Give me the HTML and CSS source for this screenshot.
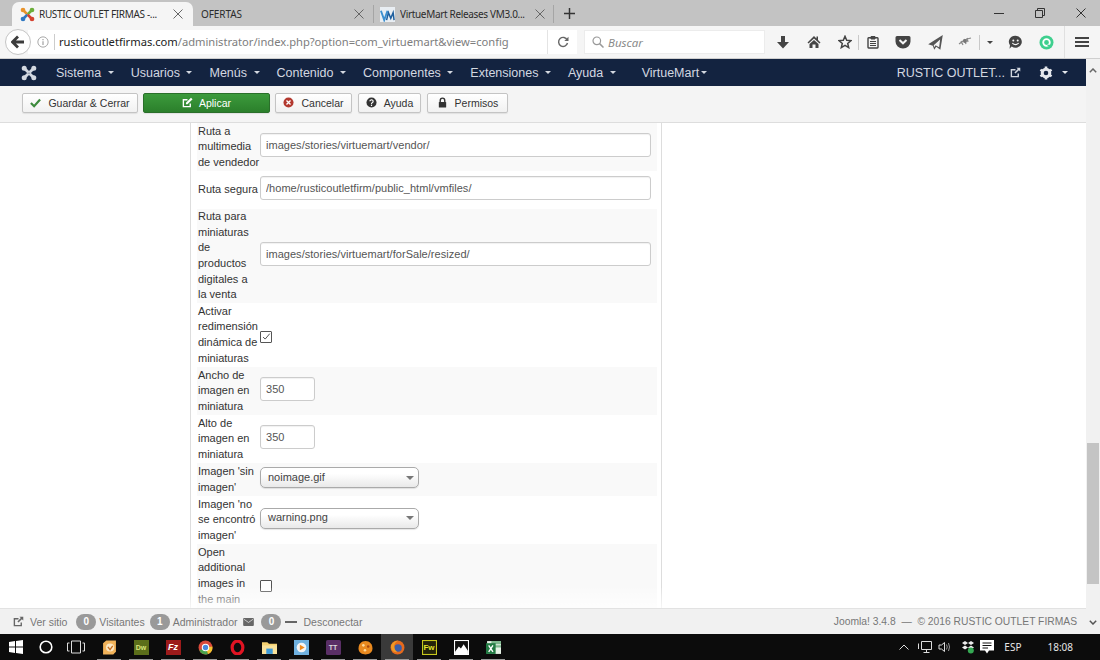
FILE: index.html
```html
<!DOCTYPE html>
<html lang="es">
<head>
<meta charset="utf-8">
<title>RUSTIC OUTLET FIRMAS</title>
<link rel="stylesheet" href="styles.css">
</head>
<body>
<header class="tabstrip">
  <div class="tab tab-active">
    <svg class="favicon" viewBox="0 0 16 16" fill="none" stroke-linecap="round"><path d="M3.500 3.500 7 7" stroke="#e8932c" stroke-width="2.800"/><path d="M3.200 3.200h.01" stroke="#e8932c" stroke-width="5"/><path d="M12.500 3.500 9 7" stroke="#6cae3a" stroke-width="2.800"/><path d="M12.800 3.200h.01" stroke="#6cae3a" stroke-width="5"/><path d="M3.500 12.500 7 9" stroke="#2f78c2" stroke-width="2.800"/><path d="M3.200 12.800h.01" stroke="#2f78c2" stroke-width="5"/><path d="M12.500 12.500 9 9" stroke="#d5412f" stroke-width="2.800"/><path d="M12.800 12.800h.01" stroke="#d5412f" stroke-width="5"/></svg>
    <span class="tab-title">RUSTIC OUTLET FIRMAS -...</span>
    <svg class="tab-x" viewBox="0 0 10 10"><path d="M0.5 0.5 9.5 9.5M9.5 0.5 0.5 9.5"/></svg>
  </div>
  <div class="tab tab-plain tab-two">
    <span class="tab-title tab-title-wide">OFERTAS</span>
    <svg class="tab-x" viewBox="0 0 10 10"><path d="M0.5 0.5 9.5 9.5M9.5 0.5 0.5 9.5"/></svg>
  </div>
  <div class="tab tab-plain tab-three">
    <svg class="favicon favicon-vm" viewBox="0 0 16 16"><rect width="16" height="16" fill="#e9eef3"/><path d="M1 4 4.500 14 8 4" fill="none" stroke="#3b8fd0" stroke-width="2"/><path d="M7 14 9 6 11.500 12 14 6 15 14" fill="none" stroke="#1f5f9e" stroke-width="1.600"/></svg>
    <span class="tab-title">VirtueMart Releases VM3.0...</span>
    <svg class="tab-x" viewBox="0 0 10 10"><path d="M0.5 0.5 9.5 9.5M9.5 0.5 0.5 9.5"/></svg>
  </div>
  <svg class="tab-plus" viewBox="0 0 12 12"><path d="M6 0V12M0 6H12"/></svg>
  <div class="window-controls">
    <svg viewBox="0 0 10 10"><path d="M0 5.500H10" stroke="#333" fill="none"/></svg>
    <svg viewBox="0 0 10 10"><path d="M.5 2.500H7.500V9.500H.5ZM2.500 2.500V.5H9.500V7.500H7.500" stroke="#333" fill="none"/></svg>
    <svg viewBox="0 0 10 10"><path d="M.5 .5 9.500 9.500M9.500 .5 .5 9.500" stroke="#333" fill="none"/></svg>
  </div>
</header>

<div class="navbar">
  <div class="back-btn"><svg viewBox="0 0 14 14"><path d="M7 1.500 1.500 7 7 12.500M2 7H13" fill="none" stroke="#3c3c3c" stroke-width="2.800"/></svg></div>
  <div class="urlbar">
    <svg class="info" viewBox="0 0 14 14"><circle cx="7" cy="7" r="6" fill="none" stroke="#999"/><path d="M7 6V10.500M7 3.500V5" stroke="#999" stroke-width="1.300"/></svg>
    <span class="url"><b>rusticoutletfirmas.com</b>/administrator/index.php?option=com_virtuemart&amp;view=config</span>
  </div>
  <div class="reload"><svg viewBox="0 0 12 12"><path d="M10.200 4A4.500 4.500 0 1 0 10.500 7" fill="none" stroke="#666" stroke-width="1.400"/><path d="M11.500 .8V5H7.300Z" fill="#666"/></svg></div>
  <div class="searchbar">
    <svg viewBox="0 0 12 12"><circle cx="4.800" cy="4.800" r="3.800" fill="none" stroke="#999" stroke-width="1.200"/><path d="M7.600 7.600 11.500 11.500" stroke="#999" stroke-width="1.500"/></svg>
    <span>Buscar</span>
  </div>
  <div class="tools">
    <svg class="t-down" viewBox="0 0 14 14"><path d="M5 1H9V7H13L7 13.500 1 7H5Z" fill="#444"/></svg>
    <svg class="t-home" viewBox="0 0 14 14"><path d="M7 1 .5 7.500 1.500 8.500 7 3.500 12.500 8.500 13.500 7.500 11 5V1.500H9.500V3.500ZM2.500 9 7 5 11.500 9V13H8.500V9.500H5.500V13H2.500Z" fill="#444"/></svg>
    <svg class="t-star" viewBox="0 0 14 14"><path d="M7 1.300 8.700 5.200 13 5.600 9.700 8.400 10.700 12.600 7 10.400 3.300 12.600 4.300 8.400 1 5.600 5.300 5.200Z" fill="none" stroke="#444" stroke-width="1.500"/></svg>
    <i class="t-sep t-sep1"></i>
    <svg class="t-clip" viewBox="0 0 14 14"><path d="M2.700 2.800H11.300A.8.8 0 0 1 12 3.600V12.200A.8.8 0 0 1 11.300 13H2.700A.8.8 0 0 1 2 12.200V3.600A.8.8 0 0 1 2.700 2.800Z" fill="none" stroke="#444" stroke-width="1.400"/><path d="M5 1.500H9V4H5ZM4 6.500H10M4 8.500H10M4 10.500H10" fill="#444" stroke="#444"/></svg>
    <svg class="t-pocket" viewBox="0 0 16 14"><path d="M2 1H14A1.500 1.500 0 0 1 15.500 2.500V6.500A7.500 7 0 0 1 .5 6.500V2.500A1.500 1.500 0 0 1 2 1Z" fill="#444"/><path d="M4.500 5 8 8.300 11.500 5" fill="none" stroke="#f5f5f5" stroke-width="2"/></svg>
    <svg class="t-plane" viewBox="0 0 14 14"><path d="M13 .8 1 8.500 4.800 9.700 6 13 7.600 10.600 11 13ZM10.800 4.500 5.500 9.200 6.200 11 7 9.300 10 11Z" fill="#555" fill-rule="evenodd"/></svg>
    <svg class="t-bug" viewBox="0 0 16 12"><path d="M2 8 6 5 10 3 14 2M4 5 6 9M7 3 9 8M10 2 11 6" stroke="#888" stroke-width="1.200" fill="none"/><circle cx="8" cy="5" r="2" fill="#777"/></svg>
    <i class="t-sep t-sep2"></i>
    <i class="t-caret"></i>
    <svg class="t-smile" viewBox="0 0 15 15"><path d="M7.500 .8A6.300 6 0 1 1 3.700 11.600L1.500 13.800 2 10.200A6.300 6 0 0 1 7.500 .8Z" fill="#444"/><circle cx="5.300" cy="5.600" r="1" fill="#f5f5f5"/><circle cx="9.700" cy="5.600" r="1" fill="#f5f5f5"/><path d="M4.300 8.200Q7.500 11 10.700 8.200" fill="none" stroke="#f5f5f5" stroke-width="1.100"/></svg>
    <svg class="t-green" viewBox="0 0 15 15"><circle cx="7.500" cy="7.500" r="7" fill="#3ecf8e"/><circle cx="7.500" cy="7.500" r="3.300" fill="none" stroke="#fff" stroke-width="1.800"/><path d="M8.500 10.500H11" stroke="#3ecf8e" stroke-width="1.500"/></svg>
    <i class="t-sep t-sep3"></i>
    <svg class="t-menu" viewBox="0 0 14 12"><path d="M0 2H14M0 6H14M0 10H14" stroke="#444" stroke-width="2.200"/></svg>
  </div>
</div>

<div class="viewport">
  <div class="page">
    <nav class="topnav">
      <svg class="logo" viewBox="0 0 16 16" fill="none" stroke="#d3d8e0" stroke-linecap="round"><path d="M3.500 3.500 6.800 6.800M12.500 3.500 9.200 6.800M3.500 12.500 6.800 9.200M12.500 12.500 9.200 9.200" stroke-width="2.800"/><path d="M3.200 3.200h.01M12.800 3.200h.01M3.200 12.800h.01M12.800 12.800h.01" stroke-width="5"/></svg>
      <ul class="menu">
        <li>Sistema<i class="caret"></i></li>
        <li>Usuarios<i class="caret"></i></li>
        <li>Menús<i class="caret"></i></li>
        <li>Contenido<i class="caret"></i></li>
        <li>Componentes<i class="caret"></i></li>
        <li>Extensiones<i class="caret"></i></li>
        <li>Ayuda<i class="caret"></i></li>
        <li class="menu-vm">VirtueMart<i class="caret caret-tight"></i></li>
      </ul>
      <div class="nav-right">
        <span class="site-name">RUSTIC OUTLET...</span>
        <svg class="ext" viewBox="0 0 12 12"><path d="M9 7V10.500H1.500V3H6" fill="none" stroke="#d3d8e0" stroke-width="1.500"/><path d="M7 .8H11.200V5L9.700 3.500 6 7.200 4.800 6 8.500 2.300Z" fill="#d3d8e0"/></svg>
        <svg class="gear" viewBox="0 0 14 14"><circle cx="7" cy="7" r="3.800" fill="none" stroke="#e4e7ec" stroke-width="3"/><path d="M7 .5V3M7 11V13.500M1.400 3.750 3.500 5M10.500 9 12.600 10.250M1.400 10.250 3.500 9M10.500 5 12.600 3.750" stroke="#e4e7ec" stroke-width="2.600"/></svg>
        <i class="caret caret-gear"></i>
      </div>
    </nav>

    <div class="toolbar">
      <button class="btn btn-save" type="button"><svg viewBox="0 0 12 12"><path d="M1 6.500 4.500 10 11 2.800" fill="none" stroke="#3d8b3d" stroke-width="2.400"/></svg>Guardar &amp; Cerrar</button>
      <button class="btn btn-apply" type="button"><svg viewBox="0 0 12 12"><path d="M9 7V10.500H1.500V3H6" fill="none" stroke="#fff" stroke-width="1.500"/><path d="M9.800.8 11.500 2.500 6 8H4.300V6.200Z" fill="#fff"/></svg>Aplicar</button>
      <button class="btn btn-cancel" type="button"><svg viewBox="0 0 12 12"><circle cx="6" cy="6" r="5.500" fill="#b3392f"/><path d="M3.800 3.800 8.200 8.200M8.200 3.800 3.800 8.200" stroke="#fff" stroke-width="1.500"/></svg>Cancelar</button>
      <button class="btn btn-help" type="button"><svg viewBox="0 0 12 12"><circle cx="6" cy="6" r="5.500" fill="#333"/><path d="M4.200 4.700A1.800 1.700 0 1 1 6.700 6.300Q6 6.600 6 7.500" fill="none" stroke="#fff" stroke-width="1.300"/><path d="M6 8.300V9.800" stroke="#fff" stroke-width="1.300"/></svg>Ayuda</button>
      <button class="btn btn-perm" type="button"><svg viewBox="0 0 12 12"><path d="M3.500 5.500V4A2.500 2.800 0 0 1 8.500 4V5.500" fill="none" stroke="#333" stroke-width="1.500"/><rect x="2" y="5.500" width="8" height="6" rx=".6" fill="#333"/></svg>Permisos</button>
    </div>

    <main class="content">
      <div class="sidebar"></div>
      <section class="panel">
        <div class="row row-3 alt"><label>Ruta a multimedia de vendedor</label><input class="field" type="text" value="images/stories/virtuemart/vendor/"></div>
        <div class="row row-seg"><label>Ruta segura</label><input class="field" type="text" value="/home/rusticoutletfirm/public_html/vmfiles/"></div>
        <div class="row row-6 alt"><label>Ruta para miniaturas de productos digitales a<br>la venta</label><input class="field" type="text" value="images/stories/virtuemart/forSale/resized/"></div>
        <div class="row row-4"><label>Activar redimensión dinámica de miniaturas</label><span class="check check-on"><svg viewBox="0 0 12 12"><path d="M2.500 6 5 8.500 10.500 2" fill="none" stroke="#444" stroke-width="1.100"/></svg></span></div>
        <div class="row row-3 alt"><label>Ancho de imagen en miniatura</label><input class="field field-small" type="text" value="350"></div>
        <div class="row row-3"><label>Alto de imagen en miniatura</label><input class="field field-small" type="text" value="350"></div>
        <div class="row row-2 alt"><label>Imagen 'sin imagen'</label><div class="chosen">noimage.gif<i></i></div></div>
        <div class="row row-3"><label>Imagen 'no se encontró imagen'</label><div class="chosen">warning.png<i></i></div></div>
        <div class="row row-4 alt"><label>Open additional images in the main</label><span class="check check-low"></span></div>
      </section>
      <div class="fade"></div>
    </main>

    <footer class="statusbar">
      <svg class="fi" viewBox="0 0 12 12"><path d="M9 7V10.500H1.500V3H6" fill="none" stroke="#666" stroke-width="1.500"/><path d="M7 .8H11.200V5L9.700 3.500 6 7.200 4.800 6 8.500 2.300Z" fill="#666"/></svg>
      <span class="s-site">Ver sitio</span>
      <span class="pill">0</span><span class="s-tight">Visitantes</span>
      <span class="pill">1</span><span class="s-tight">Administrador</span>
      <svg class="mail" viewBox="0 0 12 9"><rect width="12" height="9" rx="1" fill="#666"/><path d="M1 1.500 6 5 11 1.500" fill="none" stroke="#eee" stroke-width=".8"/></svg>
      <span class="pill">0</span>
      <i class="dash"></i>
      <span class="s-out">Desconectar</span>
      <span class="s-copy">Joomla! 3.4.8 &nbsp;— &nbsp;© 2016 RUSTIC OUTLET FIRMAS</span>
    </footer>
  </div>
  <aside class="scrollbar">
    <svg viewBox="0 0 8 5"><path d="M.8 4.200 4 1 7.200 4.200" fill="none" stroke="#666" stroke-width="1.500"/></svg>
    <div class="scroll-track"><div class="thumb"></div></div>
    <svg viewBox="0 0 8 5"><path d="M.8 .8 4 4 7.200 .8" fill="none" stroke="#555" stroke-width="1.500"/></svg>
  </aside>
</div>

<div class="taskbar">
  <svg class="tb-win" viewBox="0 0 14 14"><path d="M0 2 6 1.100V6.500H0ZM7 1 14 0V6.500H7ZM0 7.500H6V12.900L0 12ZM7 7.500H14V14L7 13Z" fill="#fff"/></svg>
  <svg class="tb-sys" viewBox="0 0 14 14"><circle cx="7" cy="7" r="5.800" fill="none" stroke="#fff" stroke-width="1.600"/></svg>
  <svg class="tb-sys tb-view" viewBox="0 0 18 14"><path d="M4.500 1H13.500V13H4.500ZM2.500 3H.5V11H2.500M15.500 3H17.500V11H15.500" fill="none" stroke="#ddd"/></svg>
  <ul class="apps">
    <li class="on"><svg viewBox="0 0 14 14"><path d="M1 3 4 .5H13V11L10.500 13.500H1Z" fill="#f2b35a"/><circle cx="7.500" cy="7" r="3.800" fill="#fbe7c4"/><path d="M5.500 6.500 7.500 9 10 5.500" fill="none" stroke="#c76d1c" stroke-width="1.200"/></svg></li>
    <li class="on"><svg viewBox="0 0 14 14"><rect width="14" height="14" fill="#5b6e1a"/></svg><span class="app-txt app-dw">Dw</span></li>
    <li class="on"><svg viewBox="0 0 14 14"><rect width="14" height="14" fill="#9c1b1b"/></svg><span class="app-txt app-fz">Fz</span></li>
    <li class="on"><svg viewBox="0 0 14 14"><circle cx="7" cy="7" r="6.500" fill="#d9493a"/><path d="M7 7 1.200 9.800A6.500 6.500 0 0 0 9.500 13Z" fill="#4aa34c"/><path d="M7 7 13.400 6A6.500 6.500 0 0 1 9.500 13Z" fill="#f3c331"/><circle cx="7" cy="7" r="3" fill="#4a89dc" stroke="#fff"/></svg></li>
    <li class="on"><svg viewBox="0 0 14 14"><ellipse cx="7" cy="7" rx="5" ry="6" fill="none" stroke="#e11423" stroke-width="3"/></svg></li>
    <li class="on"><svg viewBox="0 0 14 14"><path d="M0 2H5L6.500 3.500H14V13H0Z" fill="#f4d06f"/><path d="M0 5H14V13H0Z" fill="#f9e29b"/><path d="M4 8H10V13H4Z" fill="#3f9bd8"/></svg></li>
    <li class="on"><svg viewBox="0 0 14 14"><rect width="14" height="14" fill="#6fb1e0"/><circle cx="7" cy="7" r="4.500" fill="#f5f5f5"/><path d="M5.500 4.500 10 7 5.500 9.500Z" fill="#f08a1d"/></svg></li>
    <li class="on"><svg viewBox="0 0 14 14"><rect width="14" height="14" rx="1.500" fill="#5a2f66"/></svg><span class="app-txt app-tt">TT</span></li>
    <li class="on"><svg viewBox="0 0 14 14"><path d="M7 1C11 1 13.500 4 13.500 8S10 13.500 7 13.500 .5 12 .5 8 3 1 7 1Z" fill="#ea8a1f"/><circle cx="5" cy="5" r="1.200" fill="#ffd99a"/><circle cx="9.500" cy="6" r="1.200" fill="#a9480f"/><circle cx="6.500" cy="9.500" r="1.200" fill="#ffd99a"/></svg></li>
    <li class="on active"><svg viewBox="0 0 14 14"><circle cx="7" cy="7" r="6.500" fill="#e66a1d"/><circle cx="7.500" cy="7.500" r="3.500" fill="#3b5ea8"/><path d="M1 5Q4 0 8 .8 5 1.500 4 5 3.500 9 7 11.500 2 12 1 7Z" fill="#f09a25"/></svg></li>
    <li class="on"><svg viewBox="0 0 14 14"><rect x=".5" y=".5" width="13" height="13" fill="#23230a" stroke="#c8c81e"/></svg><span class="app-txt app-fw">Fw</span></li>
    <li class="on"><svg viewBox="0 0 14 14"><rect width="14" height="14" fill="#fff"/><rect x="1" y="1" width="12" height="12" fill="#111"/><path d="M1 11 4.500 6 6.500 8 9 4 13 10V13H1Z" fill="#fff"/></svg></li>
    <li class="on"><svg viewBox="0 0 14 14"><rect x="1" y="1" width="13" height="12" fill="#e6f2e6"/><path d="M5 1H14V4H5ZM5 5H14V7H5Z" fill="#7fb88f"/><rect y="3" width="9" height="10" fill="#227a43"/><path d="M2.500 5 6.500 11M6.500 5 2.500 11" stroke="#fff" stroke-width="1.300"/></svg></li>
  </ul>
  <div class="tray">
    <svg class="tr-up" viewBox="0 0 10 6"><path d="M.5 5.500 5 1 9.500 5.500" fill="none" stroke="#ddd"/></svg>
    <svg class="tr-net" viewBox="0 0 14 14"><path d="M3.500 1.500H13.500V9.500H3.500ZM.5 3.500V9M8.500 9.500V12.500M5.500 12.500H11.500" fill="none" stroke="#ddd"/></svg>
    <svg class="tr-vol" viewBox="0 0 14 14"><path d="M1 5H3.500L6.500 2.500V11.500L3.500 9H1Z" fill="none" stroke="#ddd"/><path d="M8.500 4.500Q10 7 8.500 9.500M10.500 3Q12.500 7 10.500 11" fill="none" stroke="#999"/></svg>
    <svg class="tr-box" viewBox="0 0 14 14"><path d="M4 1 7 3 4 5 1 3ZM10 1 13 3 10 5 7 3ZM4 5.500 7 7.500 4 9.500 1 7.500ZM10 5.500 13 7.500 10 9.500 7 7.500Z" fill="#eee"/><circle cx="9.800" cy="10.500" r="3" fill="#35a853"/></svg>
    <svg class="tr-msg" viewBox="0 0 14 14"><path d="M0 0H14V10.500H9L7 13.500 5 10.500H0Z" fill="#fff"/><path d="M2.500 3H11.500M2.500 5.500H11.500M2.500 8H8" stroke="#111"/></svg>
    <span class="tr-lang">ESP</span>
    <span class="tr-time">18:08</span>
  </div>
</div>
</body>
</html>
```

FILE: styles.css
```css
* { box-sizing: border-box; }
html, body { margin: 0; padding: 0; height: 100%; }
body {
  width: 1100px;
  height: 660px;
  overflow: hidden;
  display: flex;
  flex-direction: column;
  font-family: "Liberation Sans", Arial, sans-serif;
  font-size: 11px;
  color: #333;
  background: #fff;
}
ul { list-style: none; margin: 0; padding: 0; }
i { font-style: normal; }
svg { display: block; flex: none; }

/* Browser tab strip */
.tabstrip {
  height: 26px;
  flex: none;
  display: flex;
  align-items: stretch;
  background: #c3c3c3;
  font-family: "Noto Sans", sans-serif;
  font-size: 10px;
  color: #2b2b2b;
  position: relative;
}
.tab { display: flex; align-items: center; }
.tab-active {
  margin-top: 2px;
  margin-left: 12px;
  width: 181px;
  padding: 0 10px 0 8px;
  background: #f5f5f5;
  border-radius: 7px 7px 0 0;
}
.favicon { width: 15px; height: 15px; margin-right: 4px; }
.favicon-vm { margin-right: 5px; }
.tab-title { flex: 1; white-space: nowrap; overflow: hidden; letter-spacing: -0.33px; }
.tab-title-wide { letter-spacing: -0.1px; }
.tab-x { width: 10px; height: 10px; fill: none; stroke: #666; }
.tab-two { width: 181px; padding: 0 9px 0 8px; border-right: 1px solid #a5a5a5; height: 18px; margin-top: 5px; }
.tab-three { width: 180px; padding: 0 8px 0 6px; border-right: 1px solid #a5a5a5; height: 18px; margin-top: 5px; }
.tab-plus { width: 11px; height: 11px; margin: 8px 0 0 10px; fill: none; stroke: #333; stroke-width: 1.6; }
.window-controls {
  margin-left: auto;
  width: 120px;
  display: flex;
  justify-content: space-between;
  padding: 8px 14px 0;
}
.window-controls svg { width: 10px; height: 10px; }

/* Browser toolbar */
.navbar {
  height: 33px;
  flex: none;
  display: flex;
  align-items: center;
  background: #f5f5f5;
  border-bottom: 1px solid #cfcfcf;
  font-family: "Noto Sans", sans-serif;
  position: relative;
  padding-left: 5px;
}
.back-btn {
  width: 26px;
  height: 26px;
  border-radius: 50%;
  background: #fff;
  border: 1px solid #c5c5c5;
  display: flex;
  align-items: center;
  justify-content: center;
  position: relative;
  z-index: 1;
}
.back-btn svg { width: 14px; height: 14px; }
.urlbar {
  width: 520px;
  height: 24px;
  margin-left: -3px;
  padding-left: 9px;
  background: #fff;
  display: flex;
  align-items: center;
  border-right: 1px solid #e4e4e4;
  font-size: 11.200px;
  letter-spacing: -0.02px;
  color: #7d7d7d;
  white-space: nowrap;
}
.urlbar b { font-weight: 400; color: #222; }
.info { width: 12px; height: 12px; margin-right: 5px; }
.url { border-left: 1px solid #ccc; padding-left: 4px; line-height: 16px; }
.reload {
  width: 29px;
  height: 24px;
  background: #fff;
  display: flex;
  align-items: center;
  justify-content: center;
}
.reload svg { width: 12px; height: 12px; }
.searchbar {
  width: 181px;
  height: 24px;
  margin-left: 7px;
  padding-left: 7px;
  background: #fff;
  border: 1px solid #ececec;
  display: flex;
  align-items: center;
  gap: 4px;
  font-style: italic;
  font-size: 11.500px;
  color: #8a8a8a;
}
.searchbar svg { width: 12px; height: 12px; }
.tools { flex: 1; display: flex; align-items: center; height: 100%; padding-left: 11px; }
.tools svg { width: 14px; height: 14px; }
.t-home { margin-left: 17px; }
.t-star { margin-left: 17px; }
.t-sep { width: 1px; height: 15px; background: #c9c9c9; }
.t-sep1 { margin-left: 6px; }
.t-clip { margin-left: 7px; }
.tools .t-pocket { width: 16px; margin-left: 15px; }
.tools .t-plane { width: 17px; height: 17px; margin-left: 16px; }
.tools .t-bug { width: 16px; margin-left: 13px; }
.t-sep2 { margin-left: 6px; }
.t-caret { margin-left: 7px; border: 3px solid transparent; border-top: 3px solid #444; border-bottom: 0; }
.tools .t-smile { width: 15px; height: 15px; margin-left: 15px; }
.tools .t-green { width: 15px; height: 15px; margin-left: 16px; }
.t-sep3 { height: 32px; margin-left: 10px; background: #e0e0e0; }
.tools .t-menu { margin-left: 10px; }

/* Page with scrollbar */
.viewport { flex: 1; min-height: 0; display: flex; }
.page { width: 1086px; display: flex; flex-direction: column; min-height: 0; }
.topnav {
  height: 27px;
  flex: none;
  display: flex;
  align-items: center;
  background: #132340;
  color: #d3d8e0;
  font-size: 12.500px;
  padding-left: 21px;
}
.logo { width: 16px; height: 16px; margin-right: 19px; }
.menu { display: flex; gap: 17px; }
.menu li { display: flex; align-items: center; white-space: nowrap; }
.menu-vm { margin-left: 9px; }
.caret { display: inline-block; margin-left: 6.500px; border: 3px solid transparent; border-top: 3px solid currentColor; border-bottom: 0; }
.caret-tight { margin-left: 2px; }
.nav-right { margin-left: auto; display: flex; align-items: center; padding-right: 18px; }
.ext { width: 11px; height: 11px; margin-left: 5px; }
.gear { width: 14px; height: 14px; margin-left: 18px; }
.caret-gear { margin-left: 9px; color: #e4e7ec; }

.toolbar {
  height: 37px;
  flex: none;
  display: flex;
  align-items: center;
  gap: 5px;
  padding: 0 0 3px 22px;
  background: #f4f4f4;
  border-bottom: 1px solid #ddd;
}
.btn {
  height: 20px;
  padding: 0;
  display: flex;
  align-items: center;
  justify-content: center;
  gap: 7px;
  font: 10.500px "Liberation Sans", Arial, sans-serif;
  color: #333;
  background: linear-gradient(#fff, #f1f1f1);
  border: 1px solid #c4c4c4;
  border-radius: 2px;
  box-shadow: 0 1px 1px rgba(0,0,0,.08);
}
.btn svg { width: 11px; height: 11px; }
.btn-save { width: 116px; }
.btn-apply {
  width: 127px;
  gap: 6px;
  color: #fff;
  background: linear-gradient(#3c9a3c, #2b7f2b);
  border-color: #2a6f2a;
}
.btn-cancel { width: 77px; }
.btn-help { width: 63px; margin-left: 1px; }
.btn-perm { width: 81px; margin-left: 1px; }

.content { flex: 1; min-height: 0; display: flex; background: #fff; position: relative; overflow: hidden; }
.sidebar { width: 190px; flex: none; }
.panel {
  width: 472px;
  flex: none;
  padding: 0 4px 0 6px;
  border-left: 1px solid #ddd;
  border-right: 1px solid #ddd;
}
.row {
  display: grid;
  grid-template-columns: 62px 1fr;
  align-items: center;
  padding-left: 1px;
  line-height: 15.600px;
}
.row.alt { background: #f9f9f9; }
.row label { display: block; }
.row-2 { height: 33px; }
.row-3 { height: 48px; }
.row-4 { height: 64px; }
.row-6 { height: 94px; }
.row-seg { height: 38px; }
.field {
  width: 391px;
  height: 24px;
  margin-bottom: 4px;
  padding: 0 5px;
  font: 11px "Liberation Sans", Arial, sans-serif;
  letter-spacing: .03px;
  color: #555;
  background: #fff;
  border: 1px solid #ccc;
  border-radius: 3px;
  box-shadow: inset 0 1px 1px rgba(0,0,0,.06);
}
.field-small { width: 55px; }
.check {
  width: 12px;
  height: 12px;
  border: 1px solid #555;
  background: #fff;
  border-radius: 1px;
}
.check svg { width: 10px; height: 10px; }
.check-on { margin-top: 4px; }
.check-low { margin-top: 20px; }
.chosen {
  width: 159px;
  height: 21px;
  margin-bottom: 4px;
  padding-left: 7px;
  display: flex;
  align-items: center;
  justify-content: space-between;
  color: #444;
  background: linear-gradient(#fff 30%, #e9e9e9);
  border: 1px solid #aaa;
  border-radius: 5px;
  box-shadow: 0 1px 1px rgba(0,0,0,.1);
}
.chosen i { margin-right: 4px; border: 4px solid transparent; border-top: 4px solid #777; border-bottom: 0; }
.fade {
  position: absolute;
  left: 0;
  right: 0;
  bottom: 0;
  height: 20px;
  background: linear-gradient(rgba(255,255,255,.1), rgba(255,255,255,.75));
  pointer-events: none;
}

.statusbar {
  height: 26px;
  flex: none;
  display: flex;
  align-items: center;
  padding: 0 9px 0 13px;
  background: #f1f1f1;
  border-top: 1px solid #e2e2e2;
  color: #777;
  font-size: 10.500px;
}
.fi { width: 11px; height: 11px; margin-right: 6px; }
.s-site { margin-right: 9px; }
.pill {
  width: 20px;
  height: 16px;
  border-radius: 8px;
  background: #999;
  color: #fff;
  font-size: 10px;
  font-weight: 700;
  line-height: 16px;
  text-align: center;
  flex: none;
}
.s-tight { margin: 0 5px 0 3px; }
.mail { width: 11px; height: 8px; margin: 0 7px 0 1px; }
.dash { width: 12px; height: 2px; background: #666; margin: 0 6px 0 4px; }
.s-copy { margin-left: auto; font-size: 10.300px; }

.scrollbar {
  width: 14px;
  flex: none;
  display: flex;
  flex-direction: column;
  align-items: center;
  background: #f1f1f1;
  padding: 9px 0;
}
.scrollbar svg { width: 8px; height: 5px; }
.scroll-track { flex: 1; width: 100%; padding-top: 370px; padding-bottom: 36px; display: flex; }
.thumb { flex: 1; margin: 0 1px; background: #c4c4c4; }

/* Windows taskbar */
.taskbar {
  height: 26px;
  flex: none;
  display: flex;
  align-items: center;
  background: #0c0c0c;
  color: #e6e6e6;
  font-family: "Noto Sans", sans-serif;
  padding-left: 9px;
}
.tb-win { width: 14px; height: 14px; }
.tb-sys { width: 14px; height: 14px; margin-left: 16px; }
.tb-view { width: 18px; margin-left: 14px; }
.apps { display: flex; margin-left: 8px; height: 100%; }
.apps li {
  width: 32px;
  display: flex;
  align-items: center;
  justify-content: center;
  position: relative;
}
.apps svg { width: 15px; height: 15px; }
.apps .on::after {
  content: "";
  position: absolute;
  left: 4px;
  right: 4px;
  bottom: 0;
  height: 1px;
  background: #999;
}
.apps .active { background: #3a3a3a; }
.app-txt { position: absolute; font: 700 7px "Liberation Sans", sans-serif; }
.app-dw { color: #d8e67a; }
.app-fz { color: #fff; font-size: 9px; font-style: italic; }
.app-tt { color: #ddd; }
.app-fw { color: #e3e32a; font-size: 8px; }
.tray { margin-left: auto; display: flex; align-items: center; padding-right: 27px; font-size: 10px; }
.tray svg { width: 14px; height: 14px; }
.tray .tr-up { width: 10px; height: 6px; }
.tr-net { margin-left: 9px; }
.tr-vol { margin-left: 6px; }
.tr-box { margin-left: 9px; }
.tr-msg { margin-left: 5px; }
.tr-lang { margin-left: 10px; }
.tr-time { margin-left: 26px; }
```
